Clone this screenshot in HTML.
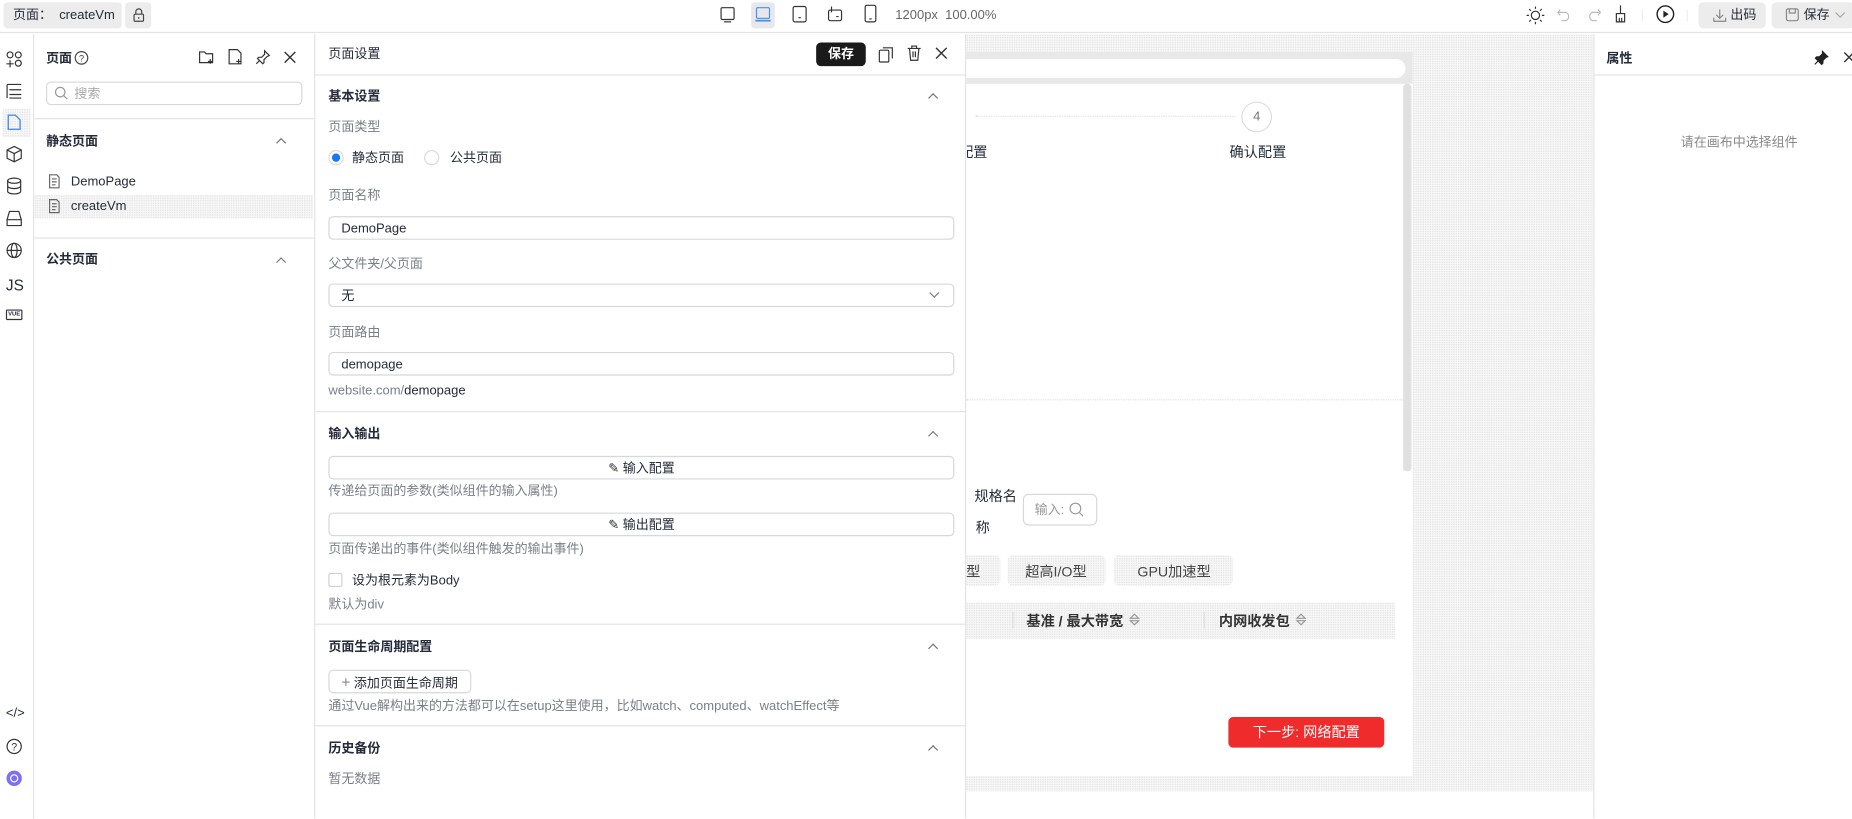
<!DOCTYPE html>
<html><head><meta charset="utf-8">
<style>
*{box-sizing:border-box;margin:0;padding:0}
html,body{width:1852px;height:818px;overflow:hidden;background:#fff}
body{font-family:"Liberation Sans","Noto Sans CJK SC",sans-serif;color:#252b3a}
#w{position:absolute;left:0;top:0;width:1568px;height:693px;transform:scale(1.18112);transform-origin:0 0;font-size:11px}
.a{position:absolute}
.t{position:absolute;white-space:nowrap;line-height:1;margin-top:1px}
.g{color:#7a7f89}
.b{font-weight:bold}
svg{position:absolute;overflow:visible}
.dots{background-color:#f7f7f7;background-image:radial-gradient(#e2e2e2 0.5px,transparent 0.6px);background-size:2px 2px}
.inp{position:absolute;border:1px solid #d6d8dc;border-radius:4px;background:#fff}
.chev{position:absolute;width:6px;height:6px;border-left:1px solid #777;border-top:1px solid #777;transform:rotate(45deg)}
</style></head><body><div id="w">
<!-- top bar -->
<div class="a" style="left:0;top:0;width:1568px;height:28px;border-bottom:1px solid #e3e3e3;background:#fff"></div>
<div class="a" style="left:3px;top:2px;width:100px;height:22px;background:#ececec;border-radius:3px"></div>
<div class="t" style="left:11px;top:7px">页面：&nbsp; createVm</div>
<div class="a" style="left:106px;top:2px;width:22px;height:22px;background:#ececec;border-radius:3px"></div>
<svg style="left:112px;top:6px" width="11" height="13"><path d="M3 6V4a2.5 2.5 0 0 1 5 0v2" fill="none" stroke="#444"/><rect x="1.5" y="6" width="8" height="6" rx="1" fill="none" stroke="#444"/><path d="M5.5 8.5v1.5" stroke="#444"/></svg>
<svg style="left:609px;top:5px" width="14" height="14"><rect x="1.5" y="1.5" width="11" height="10" rx="1" fill="none" stroke="#333"/><path d="M4 13.5h6" stroke="#333"/></svg>
<div class="a" style="left:636px;top:2px;width:20px;height:22px;background:#e6e8ec;border-radius:3px"></div>
<svg style="left:639px;top:5px" width="14" height="14"><rect x="1.5" y="1.5" width="11" height="9" rx="1" fill="none" stroke="#4b8fef"/><path d="M0.5 12.5h13" stroke="#4b8fef" stroke-width="1.5"/></svg>
<svg style="left:670px;top:5px" width="14" height="14"><rect x="1.5" y="0.5" width="11" height="13" rx="1.5" fill="none" stroke="#333"/><path d="M6 10h2" stroke="#333"/></svg>
<svg style="left:700px;top:5px" width="14" height="14"><rect x="1.5" y="3.5" width="11" height="9" rx="1.5" fill="none" stroke="#333"/><path d="M4 0.5v5M8 9h2" stroke="#333"/></svg>
<svg style="left:731px;top:4px" width="12" height="16"><rect x="1.5" y="0.5" width="9" height="14" rx="1.5" fill="none" stroke="#333"/><path d="M5 12h2" stroke="#333"/></svg>
<div class="t g" style="left:758px;top:7px;color:#666">1200px&nbsp; 100.00%</div>
<svg style="left:1292px;top:5px" width="16" height="16"><circle cx="8" cy="8" r="3.5" fill="none" stroke="#333"/><path d="M8 0.5v2M8 13.5v2M0.5 8h2M13.5 8h2M2.7 2.7l1.4 1.4M11.9 11.9l1.4 1.4M2.7 13.3l1.4-1.4M11.9 4.1l1.4-1.4" stroke="#333"/></svg>
<svg style="left:1318px;top:6px" width="14" height="12"><path d="M3 2L1 4.5 3 7M1 4.5h7a4 4 0 0 1 0 7H4" fill="none" stroke="#bbb"/></svg>
<svg style="left:1342px;top:6px" width="14" height="12"><path d="M11 2l2 2.5L11 7M13 4.5H6a4 4 0 0 0 0 7h4" fill="none" stroke="#bbb"/></svg>
<svg style="left:1366px;top:4px" width="12" height="16"><path d="M6 0.5v7M2.5 7.5h7v7h-7zM5 11v3.5M7 11v3.5" fill="none" stroke="#333"/></svg>
<div class="a" style="left:1390px;top:8px;width:1px;height:10px;background:#eee"></div>
<svg style="left:1402px;top:4px" width="16" height="16"><circle cx="8" cy="8" r="7" fill="none" stroke="#222" stroke-width="1.2"/><path d="M6.3 5v6l4.5-3z" fill="#222"/></svg>
<div class="a" style="left:1428px;top:8px;width:1px;height:10px;background:#eee"></div>
<div class="a" style="left:1438px;top:2px;width:57px;height:22px;background:#ececec;border-radius:4px"></div>
<svg style="left:1450px;top:7px" width="12" height="12"><path d="M6 1v7M3 5.5l3 3 3-3M1 8v3h10V8" fill="none" stroke="#888"/></svg>
<div class="t" style="left:1465px;top:7px">出码</div>
<div class="a" style="left:1500px;top:2px;width:70px;height:22px;background:#ececec;border-radius:4px"></div>
<svg style="left:1512px;top:7px" width="12" height="12"><rect x="0.5" y="0.5" width="10" height="10" rx="1.5" fill="none" stroke="#888"/><path d="M3 1v3h5V1" fill="none" stroke="#888"/></svg>
<div class="t" style="left:1527px;top:7px">保存</div>
<div class="chev" style="left:1555px;top:8px;transform:rotate(225deg);border-color:#aaa"></div>

<!-- left icon bar -->
<div class="a" style="left:28px;top:29px;width:1px;height:664px;background:#e3e3e3"></div>
<svg style="left:5px;top:43px" width="14" height="14"><circle cx="3.5" cy="3.5" r="2.5" fill="none" stroke="#333"/><circle cx="10.5" cy="3.5" r="2.5" fill="none" stroke="#333"/><circle cx="10.5" cy="10.5" r="2.5" fill="none" stroke="#333"/><path d="M3.5 8v6M0.5 11h6" stroke="#333"/></svg>
<svg style="left:5px;top:70px" width="14" height="14"><path d="M1 1.5h12M3 6h10M3 10h10M3 13h10M1 1.5v11.5" fill="none" stroke="#333"/></svg>
<div class="a dots" style="left:2px;top:92px;width:24px;height:24px"></div>
<svg style="left:6px;top:96px" width="12" height="15"><path d="M1 1.5h6l4 4v8H1z" fill="none" stroke="#4b8fef" stroke-width="1.2"/></svg>
<svg style="left:5px;top:123px" width="14" height="15"><path d="M7 1l6 3v7l-6 3-6-3V4zM1 4l6 3 6-3M7 7v7" fill="none" stroke="#333"/></svg>
<svg style="left:5px;top:150px" width="14" height="15"><ellipse cx="7" cy="3" rx="5.5" ry="2.2" fill="none" stroke="#333"/><path d="M1.5 3v9c0 1.2 2.5 2.2 5.5 2.2s5.5-1 5.5-2.2V3M1.5 7.5c0 1.2 2.5 2.2 5.5 2.2s5.5-1 5.5-2.2" fill="none" stroke="#333"/></svg>
<svg style="left:5px;top:178px" width="14" height="14"><path d="M3 1h8l2 7H1zM1 8h12v5H1z" fill="none" stroke="#333"/></svg>
<svg style="left:5px;top:205px" width="14" height="14"><circle cx="7" cy="7" r="6" fill="none" stroke="#333"/><ellipse cx="7" cy="7" rx="2.5" ry="6" fill="none" stroke="#333"/><path d="M1 7h12" stroke="#333"/></svg>
<div class="t" style="left:5px;top:234px;font-size:13px">JS</div>
<div class="a" style="left:5px;top:262px;width:14px;height:9px;border:1px solid #333;border-radius:1px;font-size:5px;line-height:7px;text-align:center;font-weight:bold">VUE</div>
<div class="t" style="left:5px;top:598px;font-size:11px">&lt;/&gt;</div>
<svg style="left:5px;top:625px" width="14" height="14"><circle cx="7" cy="7" r="6" fill="none" stroke="#333"/><text x="7" y="10.5" font-size="9" text-anchor="middle" fill="#333" font-family="Liberation Sans">?</text></svg>
<svg style="left:5px;top:652px" width="14" height="14"><circle cx="7" cy="7" r="6.5" fill="#7c6ff0"/><circle cx="7" cy="7" r="3" fill="none" stroke="#fff"/></svg>

<!-- page panel -->
<div class="t b" style="left:39px;top:44px">页面</div>
<svg style="left:63px;top:43px" width="12" height="12"><circle cx="6" cy="6" r="5.3" fill="none" stroke="#444"/><text x="6" y="9" font-size="8" text-anchor="middle" fill="#444" font-family="Liberation Sans">?</text></svg>
<svg style="left:168px;top:42px" width="14" height="13"><path d="M1 2h4l1.5 1.5H12V11H1z" fill="none" stroke="#333"/><path d="M10 8v4M8 10h4" stroke="#333"/></svg>
<svg style="left:193px;top:41px" width="13" height="14"><path d="M1 1h7l3 3v9H1z" fill="none" stroke="#333"/><path d="M9 9v4M7 11h4" stroke="#333"/></svg>
<svg style="left:216px;top:42px" width="13" height="13"><path d="M8 1l4 4-2 1-2.5 2.5 0 2.5-1 1L2 7.5l1-1h2.5L8 4zM4 9l-3 3" fill="none" stroke="#333"/></svg>
<svg style="left:240px;top:43px" width="11" height="11"><path d="M1 1l9 9M10 1l-9 9" stroke="#333" stroke-width="1.2"/></svg>
<div class="inp" style="left:39px;top:69px;width:217px;height:20px"></div>
<svg style="left:46px;top:73px" width="12" height="12"><circle cx="5" cy="5" r="4" fill="none" stroke="#999"/><path d="M8 8l3 3" stroke="#999"/></svg>
<div class="t g" style="left:63px;top:74px;color:#aaa">搜索</div>
<div class="a" style="left:29px;top:100px;width:237px;height:1px;background:#e3e3e3"></div>
<div class="t b" style="left:39px;top:114px">静态页面</div>
<div class="chev" style="left:235px;top:118px"></div>
<svg style="left:41px;top:147px" width="10" height="13"><path d="M1 1h6l2 2v9H1z M3 4.5h4M3 7h4M3 9.5h3" fill="none" stroke="#666"/></svg>
<div class="t" style="left:60px;top:148px">DemoPage</div>
<div class="a dots" style="left:29px;top:165px;width:236px;height:20px"></div>
<svg style="left:41px;top:168px" width="10" height="13"><path d="M1 1h6l2 2v9H1z M3 4.5h4M3 7h4M3 9.5h3" fill="none" stroke="#666"/></svg>
<div class="t" style="left:60px;top:169px">createVm</div>
<div class="a" style="left:29px;top:201px;width:237px;height:1px;background:#e3e3e3"></div>
<div class="t b" style="left:39px;top:214px">公共页面</div>
<div class="chev" style="left:235px;top:219px"></div>

<!-- canvas -->
<div class="a dots" style="left:266px;top:29px;width:1083px;height:664px"></div>
<div class="a" style="left:700px;top:44px;width:496px;height:613px;background:#fff"></div>
<div class="a" style="left:700px;top:44px;width:496px;height:27px;background:#e8e8e8"></div>
<div class="a" style="left:700px;top:50px;width:490px;height:16px;background:#fff;border-radius:8px"></div>
<div class="a" style="left:1188px;top:71px;width:7px;height:328px;background:#e0e0e0;border-radius:3px"></div>
<div class="a" style="left:826px;top:98px;width:220px;border-top:1px dotted #ddd"></div>
<div class="a" style="left:1051px;top:86px;width:26px;height:26px;border:1px solid #ddd;border-radius:50%;text-align:center;line-height:24px;color:#777">4</div>
<div class="t" style="left:1041px;top:122px;font-size:12px">确认配置</div>
<div class="t" style="left:812px;top:122px;font-size:12px">配置</div>
<div class="a" style="left:818px;top:338px;width:370px;border-top:1px dotted #ddd"></div>
<div class="t" style="left:825px;top:413px;font-size:12px">规格名</div>
<div class="t" style="left:826px;top:440px;font-size:12px">称</div>
<div class="inp" style="left:866px;top:418px;width:63px;height:27px;border-radius:5px"></div>
<div class="t g" style="left:876px;top:426px;color:#999">输入:</div>
<svg style="left:905px;top:425px" width="13" height="13"><circle cx="5.5" cy="5.5" r="4.5" fill="none" stroke="#999"/><path d="M9 9l3 3" stroke="#999"/></svg>
<div class="a dots" style="left:806px;top:470px;width:41px;height:26px;border-radius:5px"></div>
<div class="t" style="left:818px;top:477px;font-size:12px;color:#444">型</div>
<div class="a dots" style="left:853px;top:470px;width:83px;height:26px;border-radius:5px"></div>
<div class="t" style="left:868px;top:477px;font-size:12px;color:#444">超高I/O型</div>
<div class="a dots" style="left:943px;top:470px;width:101px;height:26px;border-radius:5px"></div>
<div class="t" style="left:963px;top:477px;font-size:12px;color:#444">GPU加速型</div>
<div class="a dots" style="left:806px;top:510px;width:375px;height:31px"></div>
<div class="a" style="left:857px;top:518px;width:1px;height:14px;background:#ddd"></div>
<div class="a" style="left:1019px;top:518px;width:1px;height:14px;background:#ddd"></div>
<div class="t b" style="left:869px;top:519px;font-size:12px;color:#333">基准 / 最大带宽</div>
<svg style="left:956px;top:519px" width="9" height="11"><path d="M1 4.5L4.5 1 8 4.5zM1 6.5L4.5 10 8 6.5z" fill="none" stroke="#999"/></svg>
<div class="t b" style="left:1032px;top:519px;font-size:12px;color:#333">内网收发包</div>
<svg style="left:1097px;top:519px" width="9" height="11"><path d="M1 4.5L4.5 1 8 4.5zM1 6.5L4.5 10 8 6.5z" fill="none" stroke="#999"/></svg>
<div class="a" style="left:1040px;top:607px;width:132px;height:26px;background:#f02b2b;border-radius:4px;color:#fff;text-align:center;line-height:27px;font-size:12px">下一步: 网络配置</div>
<div class="a" style="left:818px;top:670px;width:531px;height:23px;background:#fff"></div>

<!-- settings panel -->
<div class="a" style="left:266px;top:29px;width:552px;height:664px;background:#fff;border-left:1px solid #e3e3e3;border-right:1px solid #e3e3e3"></div>
<div class="t" style="left:278px;top:40px">页面设置</div>
<div class="a" style="left:691px;top:36px;width:42px;height:20px;background:#1a1a1a;border-radius:4px;color:#fff;text-align:center;line-height:20px;font-weight:bold">保存</div>
<svg style="left:744px;top:39px" width="13" height="14"><rect x="0.5" y="3.5" width="8" height="10" rx="1" fill="none" stroke="#333"/><path d="M3.5 1.5h8v9" fill="none" stroke="#333"/></svg>
<svg style="left:768px;top:38px" width="12" height="14"><path d="M0.5 3h11M4 3V1h4v2M2 3l1 10h6l1-10M5 5.5v5M7 5.5v5" fill="none" stroke="#333"/></svg>
<svg style="left:792px;top:40px" width="10" height="10"><path d="M0.5 0.5l9 9M9.5 0.5l-9 9" stroke="#333" stroke-width="1.2"/></svg>
<div class="a" style="left:267px;top:63px;width:551px;height:1px;background:#e3e3e3"></div>
<div class="t b" style="left:278px;top:76px">基本设置</div>
<div class="chev" style="left:787px;top:80px"></div>
<div class="t g" style="left:278px;top:102px">页面类型</div>
<div class="a" style="left:278px;top:127px;width:13px;height:13px;border:1px solid #dadada;border-radius:50%"></div>
<div class="a" style="left:282px;top:131px;width:5px;height:5px;background:#1677ff;border-radius:50%;box-shadow:0 0 0 1px #1677ff"></div>
<div class="t" style="left:298px;top:128px">静态页面</div>
<div class="a" style="left:359px;top:127px;width:13px;height:13px;border:1px solid #dadada;border-radius:50%"></div>
<div class="t" style="left:381px;top:128px">公共页面</div>
<div class="t g" style="left:278px;top:160px">页面名称</div>
<div class="inp" style="left:278px;top:183px;width:530px;height:20px"></div>
<div class="t" style="left:289px;top:188px">DemoPage</div>
<div class="t g" style="left:278px;top:218px">父文件夹/父页面</div>
<div class="inp" style="left:278px;top:240px;width:530px;height:20px"></div>
<div class="t" style="left:289px;top:245px">无</div>
<div class="chev" style="left:788px;top:245px;transform:rotate(225deg)"></div>
<div class="t g" style="left:278px;top:276px">页面路由</div>
<div class="inp" style="left:278px;top:298px;width:530px;height:20px"></div>
<div class="t" style="left:289px;top:303px">demopage</div>
<div class="t g" style="left:278px;top:325px">website.com/<span style="color:#252b3a">demopage</span></div>
<div class="a" style="left:267px;top:348px;width:551px;height:1px;background:#e3e3e3"></div>
<div class="t b" style="left:278px;top:362px">输入输出</div>
<div class="chev" style="left:787px;top:366px"></div>
<div class="inp" style="left:278px;top:386px;width:530px;height:20px"></div>
<div class="t" style="left:515px;top:391px">✎ 输入配置</div>
<div class="t g" style="left:278px;top:410px">传递给页面的参数(类似组件的输入属性)</div>
<div class="inp" style="left:278px;top:434px;width:530px;height:20px"></div>
<div class="t" style="left:515px;top:439px">✎ 输出配置</div>
<div class="t g" style="left:278px;top:459px">页面传递出的事件(类似组件触发的输出事件)</div>
<div class="a" style="left:278px;top:485px;width:12px;height:12px;border:1px solid #d0d0d0;border-radius:2px"></div>
<div class="t" style="left:298px;top:486px">设为根元素为Body</div>
<div class="t g" style="left:278px;top:506px">默认为div</div>
<div class="a" style="left:267px;top:528px;width:551px;height:1px;background:#e3e3e3"></div>
<div class="t b" style="left:278px;top:542px">页面生命周期配置</div>
<div class="chev" style="left:787px;top:546px"></div>
<div class="inp" style="left:278px;top:567px;width:121px;height:20px"></div>
<div class="t" style="left:289px;top:571px"><span style="color:#888;font-size:13px;line-height:11px">+</span> 添加页面生命周期</div>
<div class="t g" style="left:278px;top:592px">通过Vue解构出来的方法都可以在setup这里使用，比如watch、computed、watchEffect等</div>
<div class="a" style="left:267px;top:614px;width:551px;height:1px;background:#e3e3e3"></div>
<div class="t b" style="left:278px;top:628px">历史备份</div>
<div class="chev" style="left:787px;top:632px"></div>
<div class="t g" style="left:278px;top:654px">暂无数据</div>

<!-- right panel -->
<div class="a" style="left:1349px;top:29px;width:219px;height:664px;background:#fff;border-left:1px solid #e3e3e3"></div>
<div class="t b" style="left:1360px;top:44px">属性</div>
<svg style="left:1536px;top:43px" width="12" height="12"><path d="M7 0.5l4.5 4.5-1.5.5-2.5 2.5-.2 2.5-1 1L1 6.2l1-1 2.5-.2L7 2.5zM3.5 8.5L0.5 11.5" fill="#222" stroke="#222"/></svg>
<svg style="left:1561px;top:44px" width="9" height="10"><path d="M0.5 0.5l8 8M8.5 0.5l-8 8" stroke="#333" stroke-width="1.2"/></svg>
<div class="a" style="left:1350px;top:63px;width:218px;height:1px;background:#e3e3e3"></div>
<div class="t g" style="left:1423px;top:115px;color:#888">请在画布中选择组件</div>
</div></body></html>
